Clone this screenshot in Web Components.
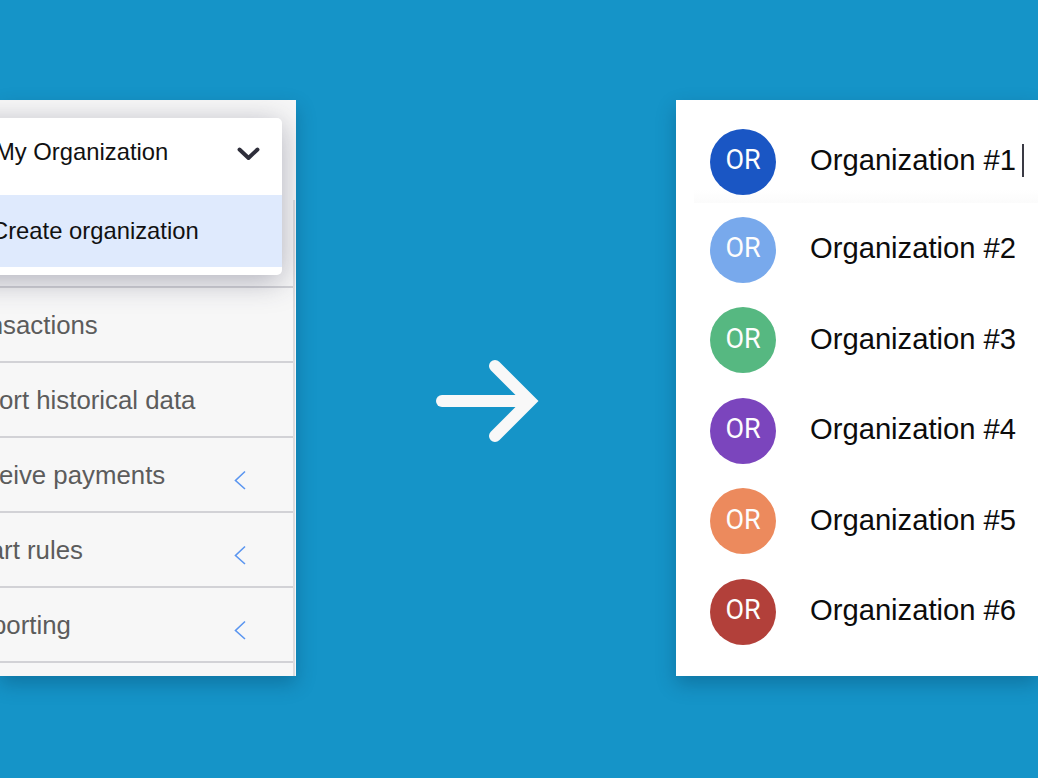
<!DOCTYPE html>
<html>
<head>
<meta charset="utf-8">
<title>Organization switcher</title>
<style>
  html, body { margin: 0; height: 100%; overflow: hidden; background: #1594c8; }
</style>
</head>
<body>
<switch-stage>
  <nav-panel slot="before">
    <org-dropdown slot="menu" current="My Organization" action="Create organization"></org-dropdown>
    <nav-row nudge="-2">Transactions</nav-row>
    <nav-row nudge="3">Import historical data</nav-row>
    <nav-row chevron>Receive payments</nav-row>
    <nav-row chevron nudge="-2">Smart rules</nav-row>
    <nav-row chevron nudge="6">Reporting</nav-row>
    <nav-row></nav-row>
  </nav-panel>
  <org-panel slot="after">
    <org-row color="#1a56c4" active caret>Organization #1</org-row>
    <org-row color="#78a9ec">Organization #2</org-row>
    <org-row color="#56b881">Organization #3</org-row>
    <org-row color="#7b45bd">Organization #4</org-row>
    <org-row color="#ec8a5d">Organization #5</org-row>
    <org-row color="#b2403a">Organization #6</org-row>
  </org-panel>
</switch-stage>

<script>
(function () {
  'use strict';

  class SwitchStage extends HTMLElement {
    constructor() {
      super();
      this.attachShadow({ mode: 'open' });
    }

    connectedCallback() {
      this.shadowRoot.innerHTML = `
        <style>
          :host {
            display: flex;
            justify-content: space-between;
            align-items: flex-start;
            box-sizing: border-box;
            width: 1038px;
            height: 778px;
            padding-top: 100px;
          }
          .arrow {
            display: block;
            width: 112px;
            height: 90px;
            margin-top: 256px;
            margin-left: 3px;
          }
        </style>
        <slot name="before"></slot>
        <svg class="arrow" viewBox="0 0 112 90" fill="none" stroke="#f8f8f8" stroke-width="12" aria-hidden="true">
          <path d="M10 45H92" stroke-linecap="round"/>
          <path d="M63 10L98 45L63 80" stroke-linecap="round" stroke-linejoin="miter"/>
        </svg>
        <slot name="after"></slot>
      `;
    }
  }

  class NavPanel extends HTMLElement {
    constructor() {
      super();
      this.attachShadow({ mode: 'open' });
    }

    connectedCallback() {
      this.shadowRoot.innerHTML = `
        <style>
          :host {
            display: block;
            position: relative;
            width: 296px;
            height: 576px;
            overflow: hidden;
            background: #f7f7f7;
            box-shadow: 0 8px 18px rgba(0, 40, 70, 0.28);
            font-family: "Liberation Sans", Arial, sans-serif;
          }
          .rows {
            display: flex;
            flex-direction: column;
            margin-left: -47px;
            padding-top: 186px;
          }
          .rail {
            position: absolute;
            top: 100px;
            right: 1px;
            bottom: 0;
            width: 2px;
            background: #dcdcde;
          }
        </style>
        <div class="rows"><slot></slot></div>
        <div class="rail"></div>
        <slot name="menu"></slot>
      `;
    }
  }

  class NavRow extends HTMLElement {
    constructor() {
      super();
      this.attachShadow({ mode: 'open' });
    }

    connectedCallback() {
      const chevron = this.hasAttribute('chevron') ? `
        <svg class="chev" viewBox="0 0 12 20" fill="none" stroke="#5b96f0" stroke-width="1.6" aria-hidden="true">
          <path d="M11 1.5L1.5 10.5L11 19"/>
        </svg>` : '';
      this.shadowRoot.innerHTML = `
        <style>
          :host {
            display: flex;
            align-items: center;
            justify-content: space-between;
            box-sizing: border-box;
            height: 75px;
            width: 340px;
            padding-right: 47px;
            border-top: 2px solid #d2d2d6;
            color: #5c5c5c;
            font-size: 25.8px;
          }
          .label { position: relative; top: 1px; left: ${this.getAttribute('nudge') || 0}px; white-space: nowrap; }
          .chev { display: block; width: 12px; height: 20px; margin-top: 10px; }
        </style>
        <span class="label"><slot></slot></span>
        ${chevron}
      `;
    }
  }

  class OrgDropdown extends HTMLElement {
    constructor() {
      super();
      this.attachShadow({ mode: 'open' });
    }

    connectedCallback() {
      this.shadowRoot.innerHTML = `
        <style>
          :host {
            display: block;
            position: absolute;
            top: 18px;
            left: -40px;
            width: 322px;
            box-sizing: border-box;
            padding-bottom: 8px;
            background: #fff;
            border-radius: 5px;
            box-shadow: 0 6px 30px rgba(50, 50, 80, 0.36);
            color: #111;
            font-size: 23.8px;
          }
          .current {
            display: flex;
            align-items: center;
            justify-content: space-between;
            height: 77px;
            padding: 0 22px 10px 35px;
            box-sizing: border-box;
          }
          .action {
            display: flex;
            align-items: center;
            height: 72px;
            padding-left: 31px;
            background: #dfeafd;
            padding-bottom: 1px;
            box-sizing: border-box;
          }
          svg { display: block; width: 23px; height: 14px; margin-top: 4px; }
        </style>
        <div class="current">
          <span>${this.getAttribute('current')}</span>
          <svg viewBox="0 0 23 14" fill="none" stroke="#2e2e3a" stroke-width="3.9" stroke-linecap="round" stroke-linejoin="round" aria-hidden="true">
            <path d="M2.5 2.5L11.5 11L20.5 2.5"/>
          </svg>
        </div>
        <div class="action">${this.getAttribute('action')}</div>
      `;
    }
  }

  class OrgPanel extends HTMLElement {
    constructor() {
      super();
      this.attachShadow({ mode: 'open' });
    }

    connectedCallback() {
      this.shadowRoot.innerHTML = `
        <style>
          :host {
            display: flex;
            flex-direction: column;
            gap: 25px;
            box-sizing: border-box;
            width: 362px;
            height: 576px;
            padding: 29px 0 0 34px;
            background: #fff;
            box-shadow: 0 8px 18px rgba(0, 40, 70, 0.28);
            font-family: "Liberation Sans", Arial, sans-serif;
          }
        </style>
        <slot></slot>
      `;
    }
  }

  class OrgRow extends HTMLElement {
    constructor() {
      super();
      this.attachShadow({ mode: 'open' });
    }

    connectedCallback() {
      const caret = this.hasAttribute('caret') ? '<span class="caret"></span>' : '';
      this.shadowRoot.innerHTML = `
        <style>
          :host {
            display: flex;
            align-items: center;
            gap: 34px;
            position: relative;
            height: 65.5px;
            color: #0c0c0c;
            font-size: 29.2px;
          }
          :host([active]) { margin-bottom: -2.5px; }
          :host([active])::after {
            content: "";
            position: absolute;
            left: -16px;
            right: 0;
            top: 61px;
            height: 13px;
            background: linear-gradient(#fff, #fbfbfb);
            z-index: 0;
          }
          .avatar {
            display: flex;
            align-items: center;
            justify-content: center;
            flex: none;
            position: relative;
            z-index: 1;
            width: 66px;
            height: 66px;
            padding-bottom: 3px;
            box-sizing: border-box;
            border-radius: 50%;
            background: ${this.getAttribute('color')};
            color: #fdfdfd;
            font-family: Roboto, sans-serif;
            font-size: 27px;
          }
          .name { display: flex; align-items: center; white-space: nowrap; position: relative; z-index: 1; top: -1px; }
          .caret {
            display: block;
            width: 2px;
            height: 33px;
            margin-left: 6px;
            background: #3a3a44;
          }
        </style>
        <span class="avatar">OR</span>
        <span class="name"><slot></slot>${caret}</span>
      `;
    }
  }

  customElements.define('switch-stage', SwitchStage);
  customElements.define('nav-panel', NavPanel);
  customElements.define('nav-row', NavRow);
  customElements.define('org-dropdown', OrgDropdown);
  customElements.define('org-panel', OrgPanel);
  customElements.define('org-row', OrgRow);
})();
</script>
</body>
</html>
